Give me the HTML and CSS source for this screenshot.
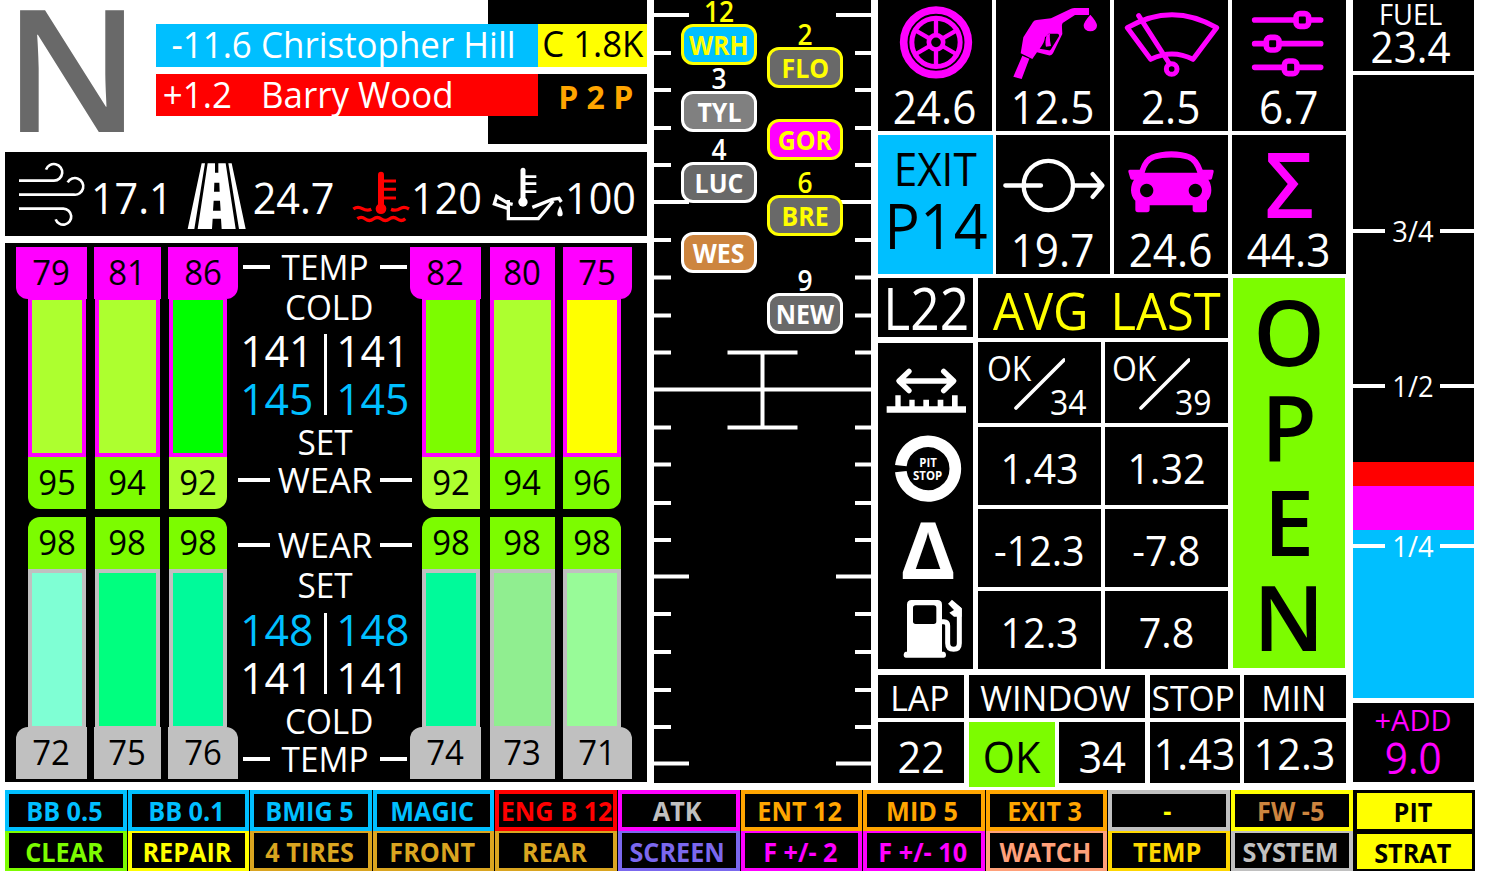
FILE: index.html
```html
<!DOCTYPE html>
<html lang="en">
<head>
<meta charset="utf-8">
<title>Race dash</title>
<link rel="stylesheet" href="styles.css">
</head>
<body>
<main class="dash">
  <section class="left">
    <header class="head">
      <div class="gear"><b class="t">N</b></div>
      <div class="rivals">
        <div class="rival ahead"><span class="t gap">-11.6</span><span class="t name">Christopher Hill</span></div>
        <div class="flag caution"><span class="t">C 1.8K</span></div>
        <div class="rival behind"><span class="t gap">+1.2</span><span class="t name">Barry Wood</span></div>
        <div class="flag p2p"><span class="t">P 2 P</span></div>
      </div>
    </header>

    <div class="weather">
      <svg class="w1" viewBox="15 456 255 252"><g fill="none" stroke="#fff" stroke-width="8"><path d="M57 542H162A25 25 0 1 0 138 509"/><path d="M57 584H222A25 25 0 1 0 203 547"/><path d="M57 626H190A24 24 0 1 1 167 658"/></g></svg>
      <span class="t v1">17.1</span>
      <svg class="w2" viewBox="555 456 189 252"><path fill="#fff" d="M605 490H615L583 687H563ZM685 490H695L737 687H717Z"/><path fill="#fff" fill-rule="evenodd" d="M623 490H677L707 687H593ZM645 490V518H655V490ZM643 548L642 575H659L658 548ZM641 602L639 632H662L660 602ZM638 656L636 687H665L663 656Z"/></svg>
      <span class="t v2">24.7</span>
      <svg class="w3" viewBox="1053 456 180 252"><g fill="none" stroke="#f00" stroke-width="9"><path stroke-width="18" stroke-linecap="round" d="M1143 524V625"/><path d="M1143 543H1188M1143 568H1188M1143 594H1188"/><path stroke-width="10" d="M1060 627Q1073 618 1087 626T1114 628M1173 628Q1188 634 1200 626T1227 627M1072 656Q1084 648 1096 657T1120 657T1144 657T1168 657T1192 657T1216 656"/></g><circle cx="1143" cy="626" r="16" fill="#f00"/></svg>
      <span class="t v3">120</span>
      <svg class="w4" viewBox="456 456 222 252"><g fill="none" stroke="#fff" stroke-width="8"><path stroke-width="15" stroke-linecap="round" d="M552 511V606"/><path d="M552 530H592M552 551H592M552 575H592"/><path stroke-width="10" d="M521 613L508 610L473 589L466 612L508 626M508 600V656H598L643 603M580 622L640 598L660 595L667 606"/></g><circle cx="552" cy="606" r="14" fill="#fff"/><path fill="#fff" d="M663 617Q671 633 671 641A8 8 0 0 1 655 641Q655 633 663 617Z"/></svg>
      <span class="t v4">100</span>
    </div>

    <div class="tyres">
      <div class="corner front">
        <div class="zone a"><div class="tab"><span class="t">79</span></div><div class="strip c-gy"></div><div class="wear c-lawn"><span class="t">95</span></div></div>
        <div class="zone b"><div class="tab"><span class="t">81</span></div><div class="strip c-gy"></div><div class="wear c-lawn"><span class="t">94</span></div></div>
        <div class="zone c"><div class="tab"><span class="t">86</span></div><div class="strip c-lime"></div><div class="wear c-gy"><span class="t">92</span></div></div>
      </div>
      <div class="mid">
        <div class="line temp"><i></i><span class="t">TEMP</span><i></i></div>
        <div class="line cold"><span class="t">COLD</span></div>
        <div class="press"><div><span class="t">141</span><span class="t set">145</span></div><hr><div><span class="t">141</span><span class="t set">145</span></div></div>
        <div class="line setl"><span class="t">SET</span></div>
        <div class="line wearl"><i></i><span class="t">WEAR</span><i></i></div>
      </div>
      <div class="corner front right">
        <div class="zone a"><div class="tab"><span class="t">82</span></div><div class="strip c-lawn"></div><div class="wear c-gy"><span class="t">92</span></div></div>
        <div class="zone b"><div class="tab"><span class="t">80</span></div><div class="strip c-gy"></div><div class="wear c-lawn"><span class="t">94</span></div></div>
        <div class="zone c"><div class="tab"><span class="t">75</span></div><div class="strip c-yel"></div><div class="wear c-lawn"><span class="t">96</span></div></div>
      </div>

      <div class="corner rear">
        <div class="zone a"><div class="tab"><span class="t">72</span></div><div class="strip c-aqua"></div><div class="wear c-lawn"><span class="t">98</span></div></div>
        <div class="zone b"><div class="tab"><span class="t">75</span></div><div class="strip c-spring"></div><div class="wear c-lawn"><span class="t">98</span></div></div>
        <div class="zone c"><div class="tab"><span class="t">76</span></div><div class="strip c-mspring"></div><div class="wear c-lawn"><span class="t">98</span></div></div>
      </div>
      <div class="mid low">
        <div class="line wearl"><i></i><span class="t">WEAR</span><i></i></div>
        <div class="line setl"><span class="t">SET</span></div>
        <div class="press"><div><span class="t set">148</span><span class="t">141</span></div><hr><div><span class="t set">148</span><span class="t">141</span></div></div>
        <div class="line cold"><span class="t">COLD</span></div>
        <div class="line temp"><i></i><span class="t">TEMP</span><i></i></div>
      </div>
      <div class="corner rear right">
        <div class="zone a"><div class="tab"><span class="t">74</span></div><div class="strip c-mspring"></div><div class="wear c-lawn"><span class="t">98</span></div></div>
        <div class="zone b"><div class="tab"><span class="t">73</span></div><div class="strip c-lgreen"></div><div class="wear c-lawn"><span class="t">98</span></div></div>
        <div class="zone c"><div class="tab"><span class="t">71</span></div><div class="strip c-pale"></div><div class="wear c-lawn"><span class="t">98</span></div></div>
      </div>
    </div>
  </section>

  <section class="track">
    <svg class="ticks" viewBox="0 0 217 782"><g stroke="#fff" stroke-width="4" fill="none">
      <path d="M0 15H35M0 202H35M0 576.5H35M0 763.5H35M182 15H217M182 202H217M182 576.5H217M182 763.5H217M0 389.5H217"/>
      <path d="M0 53H17M0 90H17M0 128H17M0 165H17M0 240H17M0 277.500H17M0 315.500H17M0 352.500H17M0 427.500H17M0 464.500H17M0 503H17M0 540H17M0 614H17M0 652H17M0 690H17M0 727H17"/>
      <path d="M201 53H217M201 90H217M201 128H217M201 165H217M201 240H217M201 277.500H217M201 315.500H217M201 352.500H217M201 427.500H217M201 464.500H217M201 503H217M201 540H217M201 614H217M201 652H217M201 690H217M201 727H217"/>
      <path d="M73.500 352.500H143.500M73.500 427.500H143.500M108.500 352V428"/></g></svg>
    <div class="car l y p1"><span class="t">12</span><b><span class="t">WRH</span></b></div>
    <div class="car r y p2"><span class="t">2</span><b><span class="t">FLO</span></b></div>
    <div class="car l p3"><span class="t">3</span><b><span class="t">TYL</span></b></div>
    <div class="car r y p4"><b><span class="t">GOR</span></b></div>
    <div class="car l p5"><span class="t">4</span><b><span class="t">LUC</span></b></div>
    <div class="car r y p6"><span class="t">6</span><b><span class="t">BRE</span></b></div>
    <div class="car l p7"><b><span class="t">WES</span></b></div>
    <div class="car r p8"><span class="t">9</span><b><span class="t">NEW</span></b></div>
  </section>

  <section class="pit">
    <div class="services">
      <div class="svc"><svg viewBox="24 0 342 255"><g fill="none" stroke="#f0f"><circle cx="198" cy="127" r="97" stroke-width="23"/><circle cx="198" cy="127" r="72.500" stroke-width="15"/><circle cx="198" cy="127" r="21.500" stroke-width="14"/><path stroke-width="13" d="M198 105V54M198 149V200M217 116L261 90.500M217 138L261 163.500M179 116L135 90.500M179 138L135 163.500"/></g></svg><span class="t">24.6</span></div>
      <div class="svc"><svg viewBox="378 0 342 255"><path fill="#f0f" fill-rule="evenodd" d="M452 160L460 112L489 66Q493 60 500 60L543 55L603 26Q608 24 614 24H657V45H615L578 69Q574 75 576 84L577 102L549 160Q545 168 536 166L501 157L487 177ZM536 101H562Q568 101 567 109L543 148Q541 152 536 151L509 146Q524 128 525 112Z"/><path fill="#f0f" d="M457 167L478 176L455 237L430 230ZM661 44Q681 66 681 77A20 17 0 0 1 641 77Q641 66 661 44ZM530 104L540 101Q538 118 543 138L528 140Q524 126 530 104Z"/></svg><span class="t">12.5</span></div>
      <div class="svc"><svg viewBox="12 0 342 255"><g fill="none" stroke="#f0f" stroke-width="15" stroke-linejoin="round"><path d="M52 83Q186 5 320 83L249 178Q186 146 122 178ZM86 47L177 189" stroke-linecap="round"/><circle cx="185" cy="207" r="16"/></g></svg><span class="t">2.5</span></div>
      <div class="svc"><svg viewBox="366 0 342 255"><g fill="none" stroke="#f0f" stroke-width="17" stroke-linecap="round"><path d="M434 60H556M600 60H632M434 131H468M510 131H632M434 202H522M564 202H632"/><rect x="558" y="41" width="38" height="38" rx="12"/><rect x="469" y="112" width="38" height="38" rx="12"/><rect x="523" y="183" width="38" height="38" rx="12"/></g></svg><span class="t">6.7</span></div>
      <div class="svc exit"><span class="t e1">EXIT</span><span class="t e2">P14</span></div>
      <div class="svc"><svg viewBox="378 405 342 290"><g fill="none" stroke="#fff" stroke-width="13" stroke-linecap="round" stroke-linejoin="round"><circle cx="535" cy="556" r="74"/><path d="M406 556H513M612 556H696M668 522L697 556L668 590"/></g></svg><span class="t">19.7</span></div>
      <div class="svc"><svg viewBox="12 405 342 290"><path fill="#f0f" fill-rule="evenodd" d="M89 509Q100 474 124 464Q150 453 184 453Q218 453 243 464Q266 474 278 509H307Q312 509 311 515L306 535Q305 539 299 539H295Q304 552 304 570Q304 588 291 602V628Q291 636 283 636H256Q248 636 248 628V615H119V628Q119 636 111 636H84Q76 636 76 628V602Q63 588 63 570Q63 552 72 539H68Q62 539 61 535L55 515Q54 509 59 509ZM104 518H262Q252 485 232 478Q213 472 184 472Q155 472 135 478Q113 485 104 518ZM110 551A20 20 0 1 0 110.100 551ZM256 551A20 20 0 1 0 256.100 551Z"/></svg><span class="t">24.6</span></div>
      <div class="svc sum"><b class="t">Σ</b><span class="t">44.3</span></div>
    </div>

    <div class="laps">
      <div class="cell l22"><span class="t">L22</span></div>
      <div class="cell avg"><span class="t">AVG</span><span class="t">LAST</span></div>
      <div class="icons">
        <svg class="ruler" viewBox="24 222 285 240"><path fill="none" stroke="#fff" stroke-width="16" stroke-linecap="round" stroke-linejoin="round" d="M88 333H250M117 304L87 333L117 362M221 304L251 333L221 362"/><path fill="#fff" d="M50 409H76V376H92V409H118V389H134V409H160V389H177V409H203V389H220V409H246V376H263V409H288V428H50Z"/></svg>
        <div class="stop"><svg viewBox="24 462 285 255"><path fill="none" stroke="#fff" stroke-width="35" d="M92.500 587A82 82 0 1 1 92.500 605"/></svg><div class="stoptext"><b>PIT</b><b>STOP</b></div></div>
        <div class="delta"><b class="t">Δ</b></div>
        <svg class="pump" viewBox="24 954 285 240"><path fill="#fff" fill-rule="evenodd" d="M111 1145V1004Q111 990 125 990H202Q216 990 216 1004V1145H222Q228 1147 228 1154Q228 1163 221 1163H108Q101 1163 101 1154Q101 1147 107 1145ZM137 1006Q129 1006 129 1014V1054Q129 1062 137 1062H191Q199 1062 199 1054V1014Q199 1006 191 1006Z"/><path fill="none" stroke="#fff" stroke-width="15" stroke-linejoin="round" d="M214 1055H222Q233 1055 233 1067V1120Q233 1138 251 1138Q268 1138 268 1120V1018L241 995"/><path fill="#fff" d="M245 992L275 1015V1040H252L238 1028L252 1020L234 1001Z"/></svg>
      </div>
      <div class="cell ok"><span class="t">OK</span><svg viewBox="0 0 150 159"><path d="M6 150L150 6" stroke="#fff" stroke-width="11" stroke-linecap="round"/></svg><span class="t">34</span></div>
      <div class="cell ok last"><span class="t">OK</span><svg viewBox="0 0 150 159"><path d="M6 150L150 6" stroke="#fff" stroke-width="11" stroke-linecap="round"/></svg><span class="t">39</span></div>
      <div class="cell num"><span class="t">1.43</span></div><div class="cell num last"><span class="t">1.32</span></div>
      <div class="cell num"><span class="t">-12.3</span></div><div class="cell num last"><span class="t">-7.8</span></div>
      <div class="cell num"><span class="t">12.3</span></div><div class="cell num last"><span class="t">7.8</span></div>
      <div class="open"><b>O</b><b>P</b><b>E</b><b>N</b></div>
    </div>

    <div class="window">
      <div class="cell hd"><span class="t">LAP</span></div>
      <div class="cell hd wide"><span class="t">WINDOW</span></div>
      <div class="cell hd"><span class="t">STOP</span></div>
      <div class="cell hd"><span class="t">MIN</span></div>
      <div class="cell big"><span class="t">22</span></div>
      <div class="cell big good"><span class="t">OK</span></div>
      <div class="cell big"><span class="t">34</span></div>
      <div class="cell big up"><span class="t">1.43</span></div>
      <div class="cell big up"><span class="t">12.3</span></div>
    </div>
  </section>

  <section class="fuel">
    <div class="box total"><span class="t f1">FUEL</span><span class="t f2">23.4</span></div>
    <div class="gauge">
      <div class="mark"><i></i><span class="t">3/4</span><i></i></div>
      <div class="mark half"><i></i><span class="t">1/2</span><i></i></div>
      <div class="mark quarter"><i></i><span class="t">1/4</span><i></i></div>
    </div>
    <div class="box add"><span class="t f1">+ADD</span><span class="t f2">9.0</span></div>
  </section>
</main>

<nav class="keys">
  <div class="key k-blue"><span class="t">BB 0.5</span></div>
  <div class="key k-blue"><span class="t">BB 0.1</span></div>
  <div class="key k-blue"><span class="t">BMIG 5</span></div>
  <div class="key k-blue"><span class="t">MAGIC</span></div>
  <div class="key k-red"><span class="t">ENG B 12</span></div>
  <div class="key k-mag"><span class="t silver">ATK</span></div>
  <div class="key k-or"><span class="t">ENT 12</span></div>
  <div class="key k-or"><span class="t">MID 5</span></div>
  <div class="key k-or"><span class="t">EXIT 3</span></div>
  <div class="key k-sil"><span class="t yellow">-</span></div>
  <div class="key k-yel"><span class="t peru">FW -5</span></div>
  <div class="key k-fill"><span class="t">PIT</span></div>
  <div class="key k-lawn"><span class="t">CLEAR</span></div>
  <div class="key k-yel"><span class="t">REPAIR</span></div>
  <div class="key k-rod"><span class="t">4 TIRES</span></div>
  <div class="key k-rod"><span class="t">FRONT</span></div>
  <div class="key k-rod"><span class="t">REAR</span></div>
  <div class="key k-slate"><span class="t">SCREEN</span></div>
  <div class="key k-mag"><span class="t">F +/- 2</span></div>
  <div class="key k-mag"><span class="t">F +/- 10</span></div>
  <div class="key k-sal"><span class="t">WATCH</span></div>
  <div class="key k-gold"><span class="t">TEMP</span></div>
  <div class="key k-sil"><span class="t">SYSTEM</span></div>
  <div class="key k-fill"><span class="t">STRAT</span></div>
</nav>
</body>
</html>
```
FILE: styles.css
```css
* { box-sizing: border-box; }
body {
  margin: 0; width: 1496px; height: 882px; overflow: hidden;
  background: #fff; color: #fff;
  font-family: "Open Sans", "Noto Sans", sans-serif; line-height: 1;
}
svg { display: block; }
.t { display: inline-block; white-space: nowrap; line-height: 1; transform: scaleX(.94); }

.dash {
  display: grid; grid-template-columns: 642px 217px 468px 121px; column-gap: 7px;
  padding-left: 5px; height: 782px;
}

/* header */
.head { display: flex; height: 144px; background: linear-gradient(90deg, #fff 483px, #000 483px); }
.gear { width: 151px; height: 144px; text-align: center; padding-right: 20px; color: #696969; }
.gear .t { font-size: 171px; line-height: 132px; font-weight: 600; transform: scaleX(1.02); }
.rivals { display: grid; grid-template: 43px 42px / 382px 109px; row-gap: 7px; height: 92px; margin-top: 24px; background: #fff; }
.rival { display: grid; grid-template-columns: 105px 1fr; align-items: center; font-size: 36px; }
.rival .t { transform-origin: left; transform: scaleX(.97); }
.ahead { background: #00bfff; padding-bottom: 2px; }
.ahead .gap { padding-left: 16px; }
.behind { background: red; }
.behind .gap { padding-left: 7px; }
.flag { display: grid; place-items: center; }
.caution { background: #ff0; color: #000; font-size: 37px; padding-bottom: 6px; }
.p2p { background: #000; color: orange; font-size: 33px; font-weight: 700; padding: 3px 0 0 7px; }
.p2p .t { transform: scaleX(.97); }

/* weather */
.weather {
  display: grid; grid-template-columns: 85px 95px 63px 103px 60px 80px 74px 78px;
  align-items: center; margin-top: 8px; height: 84px; background: #000; font-size: 44px;
}
.weather svg { height: 84px; }
.w1 { width: 85px; }
.w2 { width: 63px; }
.w3 { width: 60px; }
.w4 { width: 74px; }
.weather .t { transform-origin: left; padding-top: 6px; }
.weather .v1 { padding-left: 1px; }
.weather .v2 { padding-left: 5px; }

/* tyres */
.tyres {
  display: grid; grid-template-columns: 222px 172px 222px; grid-template-rows: 262px 262px; row-gap: 8px;
  padding: 4px 0 0 11px; margin-top: 7px; height: 539px; background: #000; font-size: 35px;
}
.corner { display: grid; grid-template-columns: 71px 67px 70px; column-gap: 7px; color: #000; }
.corner.right { grid-template-columns: 71px 65px 69px; column-gap: 8.500px; }
.zone { display: flex; flex-direction: column; }
.rear .zone { flex-direction: column-reverse; }
.tab, .wear { height: 52px; display: grid; place-items: center; padding-bottom: 3px; }
.front .tab { background: #f0f; }
.rear .tab { background: silver; }
.strip { height: 158px; width: 58px; border: 4px solid #f0f; border-top-width: 1px; }
.rear .strip { border-color: silver; border-width: 4px 4px 1px; }
.wear { width: 58px; }
.a .strip, .a .wear { margin-left: 12px; }
.b .strip, .b .wear { width: 65px; margin-left: 1px; }
.c .strip, .c .wear { margin-left: 1px; }
.right .b .strip, .right .b .wear, .right .c .strip, .right .c .wear { margin-left: 0; }
.front .a > .tab, .front .a > .wear { border-bottom-left-radius: 12px; }
.front .c > .tab, .front .c > .wear { border-bottom-right-radius: 12px; }
.rear .a > .tab, .rear .a > .wear { border-top-left-radius: 12px; }
.rear .c > .tab, .rear .c > .wear { border-top-right-radius: 12px; }
.c-gy { background: #adff2f; }
.c-lawn { background: #7cfc00; }
.c-lime { background: #0f0; }
.c-yel { background: #ff0; }
.c-aqua { background: #7fffd4; }
.c-spring { background: #00ff7f; }
.c-mspring { background: #00fa9a; }
.c-lgreen { background: #90ee90; }
.c-pale { background: #98fb98; }

.mid { display: flex; flex-direction: column; width: 174px; font-size: 34px; }
.line { display: flex; align-items: center; justify-content: center; height: 39px; flex: none; }
.line i { height: 4px; background: #fff; flex: none; }
.line .t { transform: scaleX(.98); }
.temp { height: 40px; }
.temp i { width: 27px; }
.temp .t { width: 110px; text-align: center; }
.wearl { height: 36px; }
.wearl i { width: 32px; }
.wearl .t { width: 110px; text-align: center; transform: scaleX(1.02); }
.cold { height: 40px; padding-left: 8px; }
.press { display: flex; justify-content: center; align-items: center; height: 94px; font-size: 44px; flex: none; }
.press > div { display: grid; grid-template-rows: 48px 48px; place-items: center; width: 85px; }
.press > div:first-child { padding-right: 14px; }
.press > div:last-child { padding-left: 7px; }
.press .t { transform: scaleX(.97); }
.press hr { width: 3px; height: 81px; margin: 0; border: 0; background: #fff; }
.set { color: #00bfff; }
.mid .setl { height: 41px; }
.low { padding-top: 10px; }
.low .setl { height: 44px; }
.low .press { height: 92px; }
.low .cold { height: 44px; }
.low .temp { height: 32px; }

/* relative track */
.track { position: relative; background: #000; }
.ticks { width: 217px; height: 782px; }
.car {
  position: absolute; width: 76px; height: 68px; display: flex; flex-direction: column;
  align-items: center; justify-content: flex-end; font-size: 28px; font-weight: 600;
}
.car > .t { height: 27px; }
.car b {
  display: grid; place-items: center; flex: none; width: 76px; height: 41px; border: 3px solid; border-radius: 12px;
  background: #696969; font-size: 26.500px; font-weight: 700; padding-top: 2px;
}
.car.y { color: #ff0; }
.l { left: 27px; }
.r { left: 113px; }
.p1 { top: -3px; }
.p2 { top: 20px; }
.p3 { top: 64px; }
.p4 { top: 92px; }
.p5 { top: 135px; }
.p6 { top: 168px; }
.p7 { top: 205px; }
.p8 { top: 266px; }
.p1 b { background: #00bfff; }
.p3 b { background: gray; }
.p4 b { background: #f0f; }
.p7 b { background: #cd853f; }

/* pit services */
.services { display: grid; grid-template: 131px 139px / repeat(4, 114px); gap: 4px; }
.svc { background: #000; display: flex; flex-direction: column; align-items: center; font-size: 45px; }
.svc svg { width: 114px; height: 85px; flex: none; }
.svc:nth-child(n+5) svg { height: 97px; }
.svc:nth-child(n+6) > span.t { margin-top: -4px; }
.svc .t { line-height: 43px; }
.exit { background: #00bfff; color: #000; width: 115px; }
.svc.exit > .e1 { margin-top: 11px; line-height: 45px; }
.svc.exit > .e2 { font-size: 63px; line-height: 68px; }
.sum b { color: #f0f; font-size: 91px; font-weight: 600; height: 97px; }
.svc.sum b { line-height: 97px; }

/* lap table */
.laps {
  display: grid; grid-template: 60px 81px 78px 78px 78px / 95px 124px 123px 113px;
  column-gap: 4px; row-gap: 4px; margin-top: 4px; height: 390px;
}
.cell { background: #000; display: grid; place-items: center; }
.l22 { font-size: 58px; height: 59px; margin-bottom: 1px; }
.l22 .t { transform: scaleX(.89); }
.avg { grid-column: 2 / 4; display: flex; justify-content: space-between; padding: 4px 4px 0 12px; font-size: 52px; margin-left: 1px; color: #ff0; }
.open { grid-column: 4; grid-row: 1 / 6; background: #7cfc00; color: #000; display: grid; grid-template-rows: repeat(4, 95px); justify-items: center; align-items: center; font-size: 91px; height: 390px; padding-top: 6px; margin-left: 1px; }
.open b { font-weight: 600; }
.icons { grid-column: 1; grid-row: 2 / 6; background: #000; display: flex; flex-direction: column; margin-top: 1px; padding-top: 1px; }
.icons svg { width: 95px; flex: none; }
.ruler, .pump { height: 80px; }
.stop { position: relative; height: 85px; }
.stop svg { height: 85px; }
.stoptext { position: absolute; inset: 32px 0 0 5px; display: flex; flex-direction: column; align-items: center; font-size: 13px; line-height: 13px; }
.stoptext b { transform: scaleX(.88); font-weight: 700; }
.delta { height: 79px; display: grid; place-items: center; font-size: 79px; padding-left: 5px; }
.delta .t { transform: scaleX(1.06); }
.num { font-size: 42px; padding-top: 4px; margin-left: 1px; }
.laps .ok { display: flex; align-items: flex-start; font-size: 34px; padding: 9px 0 0 9px; margin-left: 1px; }
.ok svg { width: 52px; height: 53px; margin: 7px 0 0 -21px; flex: none; }
.ok .t { transform-origin: left; }
.ok svg + .t { margin: 34px 0 0 -15px; }
.laps .last { margin-left: 0; }
.laps .ok.last { padding-left: 7px; }

/* window table */
.window { display: grid; grid-template: 43px 61px / 86px 86px 86px 90px 102px; column-gap: 4.500px; row-gap: 4px; margin-top: 7px; }
.wide { grid-column: 2 / 4; }
.hd { font-size: 34px; padding: 2px 3px 0 0; }
.hd .t { transform: scaleX(.99); }
.hd.wide .t { transform: scaleX(1.01); }
.big { font-size: 44px; padding-top: 6px; }
.big.up { padding-top: 0; }
.good { background: #7cfc00; color: #000; height: 65px; padding-bottom: 4px; }

/* fuel */
.box { background: #000; display: flex; flex-direction: column; align-items: center; padding-right: 5px; }
.total { height: 71px; }
.f1 { font-size: 29px; }
.f2 { font-size: 43px; margin-top: -3px; }
.total .f1 { margin-top: -1px; }
.gauge {
  height: 623px; margin: 4px 0 5px; padding-top: 77px;
  background: linear-gradient(#000 387px, red 387px 411px, #f0f 411px 455px, #00bfff 455px);
}
.mark { display: flex; justify-content: space-between; align-items: center; height: 157.500px; font-size: 29px; }
.half { height: 152px; }
.quarter { height: 168px; }
.mark i { height: 4px; background: #fff; width: 34px; }
.mark i:first-child { width: 32px; }
.add { height: 79px; color: #f0f; padding-right: 1px; }
.add .f1 { margin-top: 2px; transform: scaleX(1); }
.add .f2 { margin-top: 2px; }

/* soft keys */
.keys {
  display: grid; grid-template-rows: 41px 40px; grid-template-columns: repeat(11, 121.600px) 121px; column-gap: 1px;
  width: 1470px; margin: 8px 0 0 5px; background: linear-gradient(#000, #000) 0 0 / 1469px 100% no-repeat;
}
.key { display: grid; place-items: center; background: #000; border: 4px solid; font-size: 26px; font-weight: 700; padding: 1px 3px 0 0; }
.key .t { transform: scaleX(.97); }
.key:nth-child(n+13) { border-top-width: 2px; border-bottom-width: 3px; padding-top: 2px; }
.k-blue { color: #00bfff; }
.k-red { color: red; }
.k-mag { color: #f0f; }
.k-or { color: orange; }
.k-sil { color: silver; }
.k-yel { color: #ff0; }
.k-lawn { color: #7cfc00; }
.k-rod { color: #daa520; }
.k-slate { color: #7b68ee; }
.k-sal { color: #ffa07a; }
.k-gold { color: gold; }
.k-fill, .keys .k-fill { background: #ff0; color: #000; border-width: 3px 3px 2px; }
.silver { color: silver; }
.yellow { color: #ff0; }
.peru { color: #cd853f; }
```
